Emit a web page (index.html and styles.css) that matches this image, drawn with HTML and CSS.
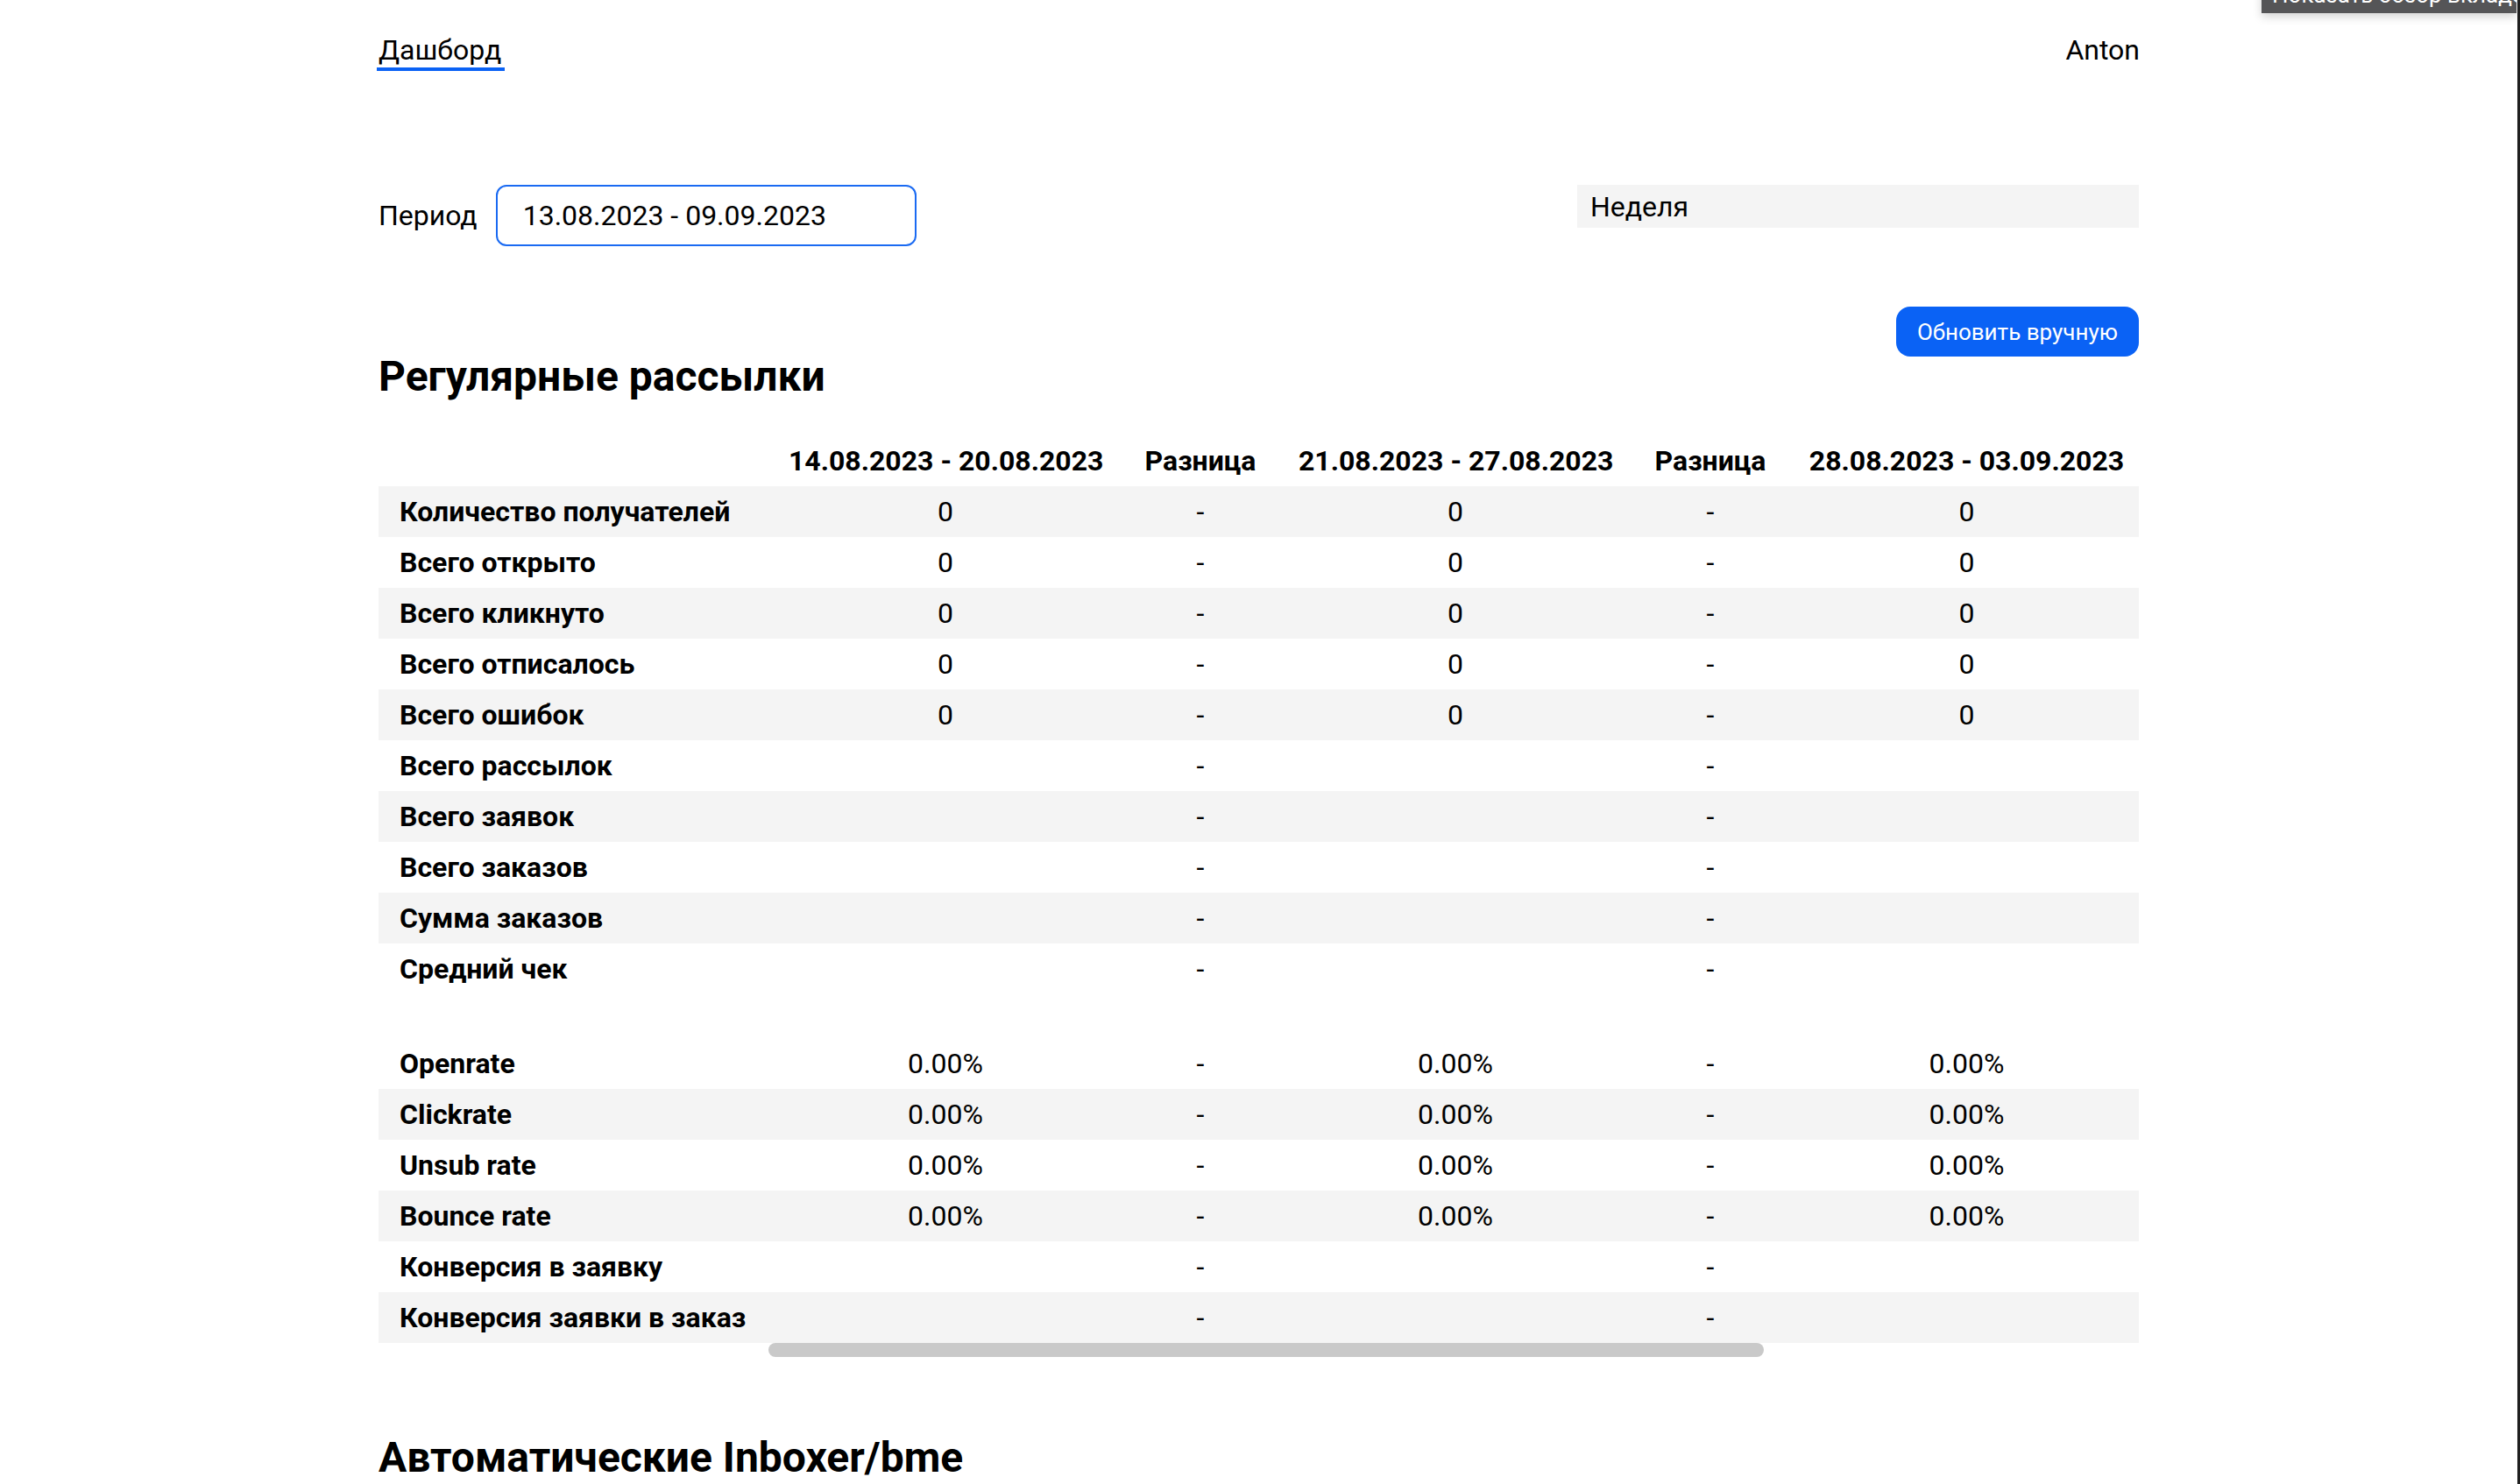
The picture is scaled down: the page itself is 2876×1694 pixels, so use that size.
FILE: index.html
```html
<!DOCTYPE html>
<html lang="ru">
<head>
<meta charset="utf-8">
<title>Дашборд</title>
<link rel="stylesheet" href="styles.css">
</head>
<body>
<div class="tooltip">Показать обзор вкладок</div>
<div class="page">
  <nav class="nav">
    <a class="nav-link active" href="#">Дашборд</a>
    <span class="user">Anton</span>
  </nav>

  <div class="filters">
    <div class="period">
      <label class="period-label">Период</label>
      <div class="period-input">13.08.2023 - 09.09.2023</div>
    </div>
    <div class="select">Неделя</div>
  </div>

  <section class="section">
    <div class="toolbar">
      <button class="btn">Обновить вручную</button>
    </div>
    <h2 class="section-title">Регулярные рассылки</h2>

    <table class="stats">
      <colgroup>
        <col class="label-col">
        <col class="date-col">
        <col class="diff-col">
        <col class="date-col">
        <col class="diff-col">
        <col class="last-col">
      </colgroup>
      <thead>
        <tr>
          <th></th>
          <th>14.08.2023 - 20.08.2023</th>
          <th>Разница</th>
          <th>21.08.2023 - 27.08.2023</th>
          <th>Разница</th>
          <th>28.08.2023 - 03.09.2023</th>
        </tr>
      </thead>
      <tbody>
        <tr><td class="label">Количество получателей</td><td>0</td><td>-</td><td>0</td><td>-</td><td>0</td></tr>
        <tr><td class="label">Всего открыто</td><td>0</td><td>-</td><td>0</td><td>-</td><td>0</td></tr>
        <tr><td class="label">Всего кликнуто</td><td>0</td><td>-</td><td>0</td><td>-</td><td>0</td></tr>
        <tr><td class="label">Всего отписалось</td><td>0</td><td>-</td><td>0</td><td>-</td><td>0</td></tr>
        <tr><td class="label">Всего ошибок</td><td>0</td><td>-</td><td>0</td><td>-</td><td>0</td></tr>
        <tr><td class="label">Всего рассылок</td><td></td><td>-</td><td></td><td>-</td><td></td></tr>
        <tr><td class="label">Всего заявок</td><td></td><td>-</td><td></td><td>-</td><td></td></tr>
        <tr><td class="label">Всего заказов</td><td></td><td>-</td><td></td><td>-</td><td></td></tr>
        <tr><td class="label">Сумма заказов</td><td></td><td>-</td><td></td><td>-</td><td></td></tr>
        <tr><td class="label">Средний чек</td><td></td><td>-</td><td></td><td>-</td><td></td></tr>
        <tr class="spacer"><td colspan="6"></td></tr>
        <tr><td class="label">Openrate</td><td>0.00%</td><td>-</td><td>0.00%</td><td>-</td><td>0.00%</td></tr>
        <tr><td class="label">Clickrate</td><td>0.00%</td><td>-</td><td>0.00%</td><td>-</td><td>0.00%</td></tr>
        <tr><td class="label">Unsub rate</td><td>0.00%</td><td>-</td><td>0.00%</td><td>-</td><td>0.00%</td></tr>
        <tr><td class="label">Bounce rate</td><td>0.00%</td><td>-</td><td>0.00%</td><td>-</td><td>0.00%</td></tr>
        <tr><td class="label">Конверсия в заявку</td><td></td><td>-</td><td></td><td>-</td><td></td></tr>
        <tr><td class="label">Конверсия заявки в заказ</td><td></td><td>-</td><td></td><td>-</td><td></td></tr>
      </tbody>
    </table>
    <div class="hscroll"><div class="hscroll-thumb"></div></div>
  </section>

  <section class="section section-auto">
    <h2 class="section-title">Автоматические Inboxer/bme</h2>
  </section>
</div>
</body>
</html>
```

FILE: styles.css
```css
* {
  box-sizing: border-box;
}

html, body {
  height: 100%;
}

body {
  margin: 0;
  overflow: hidden;
  background: #fff;
  color: #000;
  font-family: Roboto, "Noto Sans", "Liberation Sans", sans-serif;
  font-size: 32px;
  border-right: 3px solid #1f1f1f;
  position: relative;
}

.tooltip {
  position: absolute;
  top: -24px;
  right: 1px;
  width: 291px;
  height: 39px;
  padding: 0 12px;
  background: #555557;
  color: #fff;
  font-size: 26px;
  line-height: 36px;
  white-space: nowrap;
  overflow: hidden;
  box-shadow: 0 4px 10px rgba(0, 0, 0, 0.18);
  z-index: 10;
}

.page {
  width: 2009px;
  margin: 0 auto;
}

.nav {
  display: flex;
  justify-content: space-between;
  align-items: flex-start;
  padding-top: 38px;
  line-height: 38px;
}

.nav-link {
  color: #000;
  text-decoration: none;
  padding: 0 4px 1px 2px;
  margin-left: -2px;
  border-bottom: 4px solid #0a62f5;
}

.user {
  line-height: 38px;
  margin-right: -1px;
}

.filters {
  display: flex;
  justify-content: space-between;
  align-items: flex-start;
  margin-top: 130px;
}

.period {
  display: flex;
  align-items: center;
  gap: 21px;
}

.period-input {
  width: 480px;
  height: 70px;
  border: 2px solid #1a6af2;
  border-radius: 12px;
  padding-left: 29px;
  display: flex;
  align-items: center;
}

.select {
  width: 641px;
  height: 49px;
  background: #f4f4f4;
  padding-left: 15px;
  display: flex;
  align-items: center;
}

.toolbar {
  display: flex;
  justify-content: flex-end;
  margin-top: 69px;
}

.btn {
  height: 57px;
  padding: 0 24px;
  border: none;
  border-radius: 16px;
  background: #0a62f5;
  color: #fff;
  font-family: Roboto, "Noto Sans", sans-serif;
  font-size: 26px;
}

.section-title {
  margin: 0;
  font-size: 48px;
  font-weight: 700;
  line-height: 46px;
}

.stats {
  margin-top: 44px;
  width: 2009px;
  table-layout: fixed;
  border-collapse: collapse;
  border-spacing: 0;
}

.stats th,
.stats td {
  height: 58px;
  padding: 0 24px;
  text-align: center;
  white-space: nowrap;
  vertical-align: middle;
  overflow: hidden;
}

.stats th {
  font-weight: 700;
}

.stats .label-col {
  width: 444px;
}

.stats .date-col {
  width: 406px;
}

.stats .diff-col {
  width: 176px;
}

.stats .last-col {
  width: 401px;
}

.stats td.label {
  text-align: left;
  font-weight: 700;
}

.stats .last-col + th,
.stats tr > :last-child {
  padding-right: 16px;
}

.stats tbody tr:nth-child(odd) td {
  background: #f4f4f4;
}

.stats tbody tr.spacer td {
  background: transparent;
  height: 50px;
}

.hscroll {
  display: flex;
  height: 16px;
}

.hscroll-thumb {
  margin-left: 445px;
  width: 1136px;
  height: 16px;
  border-radius: 8px;
  background: #c9c9c9;
}

.section-auto {
  margin-top: 92px;
}
```
